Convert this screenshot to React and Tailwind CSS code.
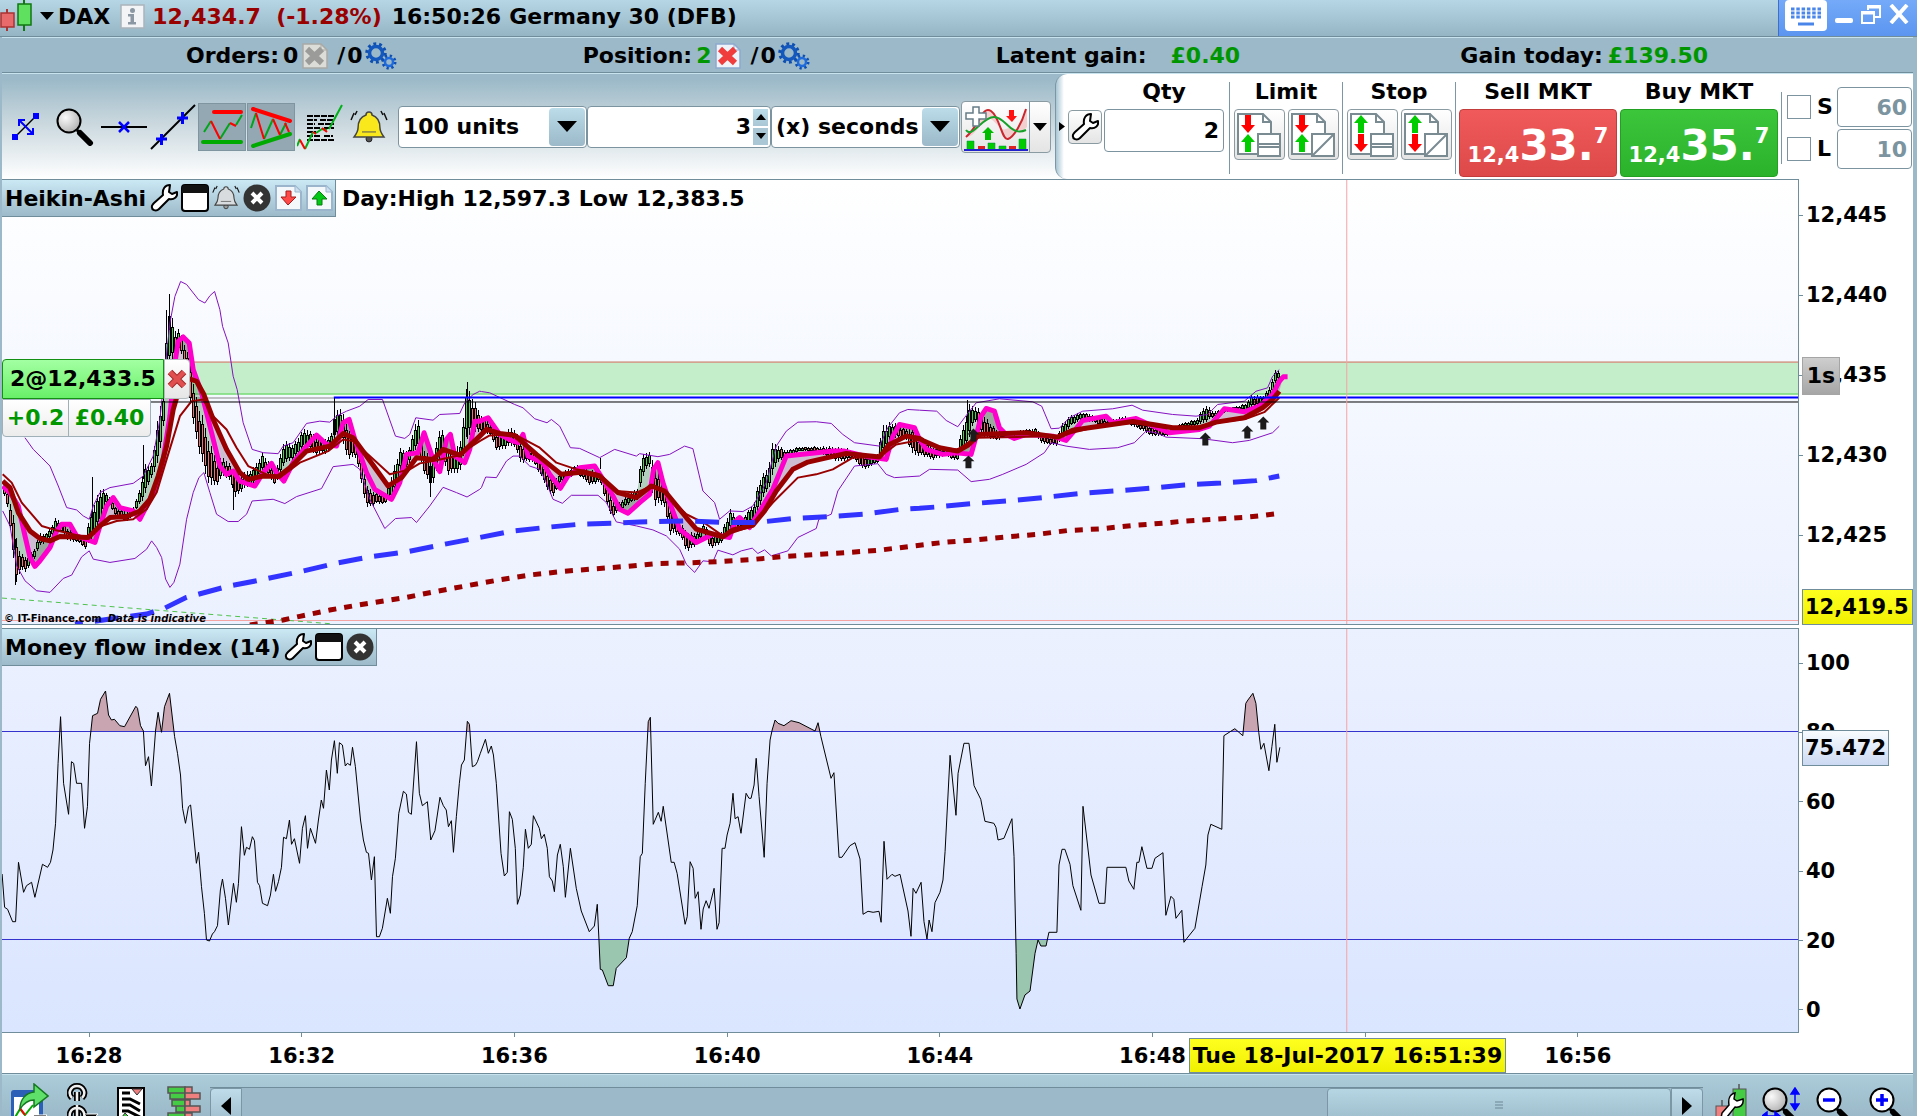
import React from 'react';

/* ---------- chart data ---------- */
const parse = (s) => s.trim().split(/\s+/).map((p) => p.split(',').map(Number));

// Joins sampled sections into one series; each section is [originX, originY, scaleX, data].
const join = (...sections) => {
  const out = [];
  let last = -1;
  sections.forEach(([ox, oy, sx, s]) => {
    parse(s).forEach((p) => {
      const x = ox + p[0] / sx;
      if (x > last) {
        out.push([x, ...p.slice(1).map((v) => oy + v / 3)]);
        last = x;
      }
    });
  });
  return out;
};
const price = (a, b, c) => join([0, 260, 3, a], [440, 360, 3, b], [880, 340, 3, c]);
const pts = (arr) => arr.map(([x, y]) => `${x.toFixed(1)},${y.toFixed(1)}`).join(' ');

const upperBand = price(
  '75,535 100,570 125,595 150,620 175,680 200,745 230,752 250,770 268,780 280,740 300,700 330,685 400,672 430,650 460,590 480,480 495,330 510,190 525,110 542,65 560,74 596,120 615,130 630,108 644,95 660,150 668,200 685,250 700,350 712,390 730,490 757,570 790,580 835,583 850,560 880,550 920,492 960,485 990,488 1010,470 1040,455 1080,440 1105,420 1148,420 1187,530 1215,537 1230,525 1248,475 1300,482 1320,465 1380,462 1395,430 1420,405 1440,395',
  '125,96 150,100 225,135 250,145 285,178 322,190 335,180 360,200 392,265 420,267 480,295 525,270 590,290 600,283 655,292 690,285 735,260 760,268 790,395 825,430 840,480 870,455 910,457 940,440 980,370 1010,260 1040,215 1075,188 1130,187 1175,192 1210,225 1245,250 1320,260 1345,205 1380,160 1405,150 1440,152',
  '172,215 200,243 235,262 255,235 290,190 360,178 460,187 487,200 515,268 540,266 570,235 610,215 700,208 758,197 790,212 880,225 950,230 985,225 1015,195 1095,185 1130,155 1165,145 1180,110 1200,90'
);
const lowerBand = price(
  '8,755 30,800 50,920 75,965 110,995 150,1000 190,958 215,948 245,893 268,875 280,900 330,910 405,898 440,870 455,845 470,865 485,895 497,960 510,985 522,970 540,915 560,780 580,700 597,655 612,640 630,700 650,765 685,787 715,787 740,765 757,725 820,720 855,733 890,712 965,688 1000,622 1060,615 1080,630 1110,720 1155,808 1187,778 1235,775 1250,790 1290,740 1330,684 1370,700 1402,713 1440,690',
  '125,385 138,353 170,355 200,305 220,290 240,290 270,320 300,330 320,370 340,420 368,432 395,408 475,408 500,430 530,488 590,500 640,512 680,530 720,570 740,615 765,640 790,605 820,608 835,573 880,587 905,575 938,567 955,583 975,572 995,590 1045,575 1075,535 1130,508 1138,480 1175,465 1195,395 1245,320 1315,313 1340,345 1365,355 1440,350',
  '150,390 235,392 275,427 330,420 370,405 440,375 495,340 515,310 560,320 630,330 715,325 765,310 800,275 830,280 860,293 970,298 1060,310 1110,303 1180,280 1200,260'
);
const slowAverage = price(
  '8,665 30,685 55,760 90,815 120,838 150,845 180,832 265,835 300,800 330,775 380,772 420,755 450,720 475,650 500,560 520,450 540,380 560,355 590,365 612,405 640,480 680,570 720,640 745,660 790,650 835,652 870,625 920,575 990,560 1030,522 1060,535 1100,590 1165,680 1205,655 1250,595 1300,600 1330,570 1380,587 1440,530',
  '140,210 180,222 225,228 290,285 365,345 430,338 480,350 535,400 590,415 635,380 675,395 740,475 770,510 850,533 880,512 940,498 975,455 1010,395 1060,330 1105,308 1220,282 1320,293 1350,255 1400,230 1440,237',
  '130,303 180,325 235,335 265,318 300,285 440,280 535,293 580,272 650,262 760,246 820,255 880,265 960,265 1010,248 1095,235 1150,205 1180,180 1200,155'
);
const thinAverage = price(
  '8,645 35,670 65,730 125,800 165,812 260,835 290,805 350,785 400,780 440,750 470,700 500,600 540,470 575,425 610,420 640,470 680,510 710,565 745,620 800,645 840,655 900,610 985,575 1030,540 1060,545 1110,590 1170,645 1230,630 1260,612 1300,605 1370,590 1440,545',
  '150,228 225,225 300,265 350,310 410,330 480,345 530,395 590,400 640,378 680,405 740,465 800,495 850,530 940,500 1000,430 1075,355 1130,345 1180,330 1240,295 1320,293 1370,255 1440,242',
  '180,325 235,330 290,295 540,290 650,262 760,250 860,265 950,262 1010,250 1100,238 1155,218 1200,175'
);
const fastAverage = price(
  '8,680 30,700 55,740 75,830 90,895 105,922 120,905 150,865 170,815 185,795 210,795 230,830 285,850 300,800 320,740 340,715 360,745 400,755 420,780 440,740 470,680 490,600 510,470 525,310 535,245 550,232 568,250 580,330 605,400 635,520 660,620 680,645 700,635 720,665 765,680 790,640 815,612 830,640 852,665 880,610 920,560 950,527 980,555 1010,560 1030,490 1048,480 1065,540 1100,640 1125,690 1175,720 1200,670 1220,585 1255,580 1273,520 1300,600 1320,637 1340,540 1352,525 1365,590 1395,610 1410,570 1425,485 1440,485',
  '145,175 180,225 220,245 235,250 250,225 265,290 310,310 330,345 362,387 385,350 420,325 465,320 490,360 520,410 540,450 565,462 600,430 630,405 642,330 655,310 670,370 690,430 720,510 770,550 820,525 870,535 885,490 900,475 930,505 970,440 1000,390 1020,340 1040,290 1180,275 1215,275 1290,293 1340,300 1360,230 1380,195 1425,205 1440,240',
  '140,330 190,345 230,340 275,345 290,290 305,230 320,207 345,215 360,265 380,285 405,297 440,285 520,290 560,303 580,280 610,243 680,230 700,250 770,237 810,255 870,280 960,270 990,260 1035,208 1095,217 1140,200 1180,165 1200,125 1212,112 1225,112'
);
const dashedTrend = price(
  '225,1095 330,1080 440,1065 495,1047 560,1015 690,980 770,965 905,937 1005,913 1110,893 1220,878 1320,858 1440,835',
  '210,517 315,505 420,495 530,492 600,488 740,485 850,490 950,490 1060,478 1170,472 1280,464 1385,450 1440,447',
  '170,503 280,493 385,485 490,475 600,463 705,455 810,447 915,437 1025,431 1130,424 1200,410'
);
const dottedTrend = price(
  '750,1098 850,1083 900,1072 990,1053 1080,1037 1220,1015 1310,997 1440,973',
  '180,662 275,647 370,637 465,629 560,622 655,613 750,611 845,607 940,601 1035,592 1130,586 1225,580 1320,573 1410,562',
  '190,610 285,602 380,593 470,586 565,574 660,569 760,559 850,552 900,547 995,541 1090,535 1140,530 1197,523'
);
// x, high, low
const candleRange = price(
  '8,670,700 25,700,760 38,760,900 47,820,980 60,880,935 75,890,940 100,870,905 120,820,860 140,820,850 165,775,820 185,785,820 205,810,850 230,825,850 255,830,870 275,740,840 300,680,800 320,700,730 345,740,770 375,755,790 400,740,770 415,700,740 432,610,720 450,620,660 465,540,640 475,430,600 490,400,500 498,180,420 510,120,320 520,200,300 540,210,280 555,260,320 570,300,440 590,420,560 610,480,640 630,550,690 650,600,680 670,590,650 690,610,670 705,640,720 730,640,690 760,620,680 785,575,640 800,600,650 825,640,680 850,540,620 880,550,600 915,500,570 950,530,590 990,530,580 1005,450,540 1020,440,530 1040,490,600 1070,540,600 1085,600,690 1100,680,750 1130,700,735 1155,700,735 1180,620,710 1200,565,640 1225,570,620 1250,460,560 1270,560,640 1295,600,700 1320,490,590 1345,570,650 1380,540,640 1400,370,540 1440,460,520',
  '150,190,230 170,220,280 220,200,260 240,240,310 280,280,310 310,310,370 335,360,420 360,340,370 410,315,345 450,330,380 480,330,370 500,380,440 515,420,480 530,430,460 560,410,440 595,380,420 603,280,370 625,272,310 640,300,440 670,380,440 690,430,530 720,490,530 738,510,580 770,520,560 790,490,520 810,520,570 840,520,555 870,450,520 900,480,510 940,430,490 955,360,450 985,320,390 992,250,370 1010,250,310 1035,270,300 1080,262,275 1130,260,280 1190,260,310 1240,270,300 1270,290,335 1315,280,310 1325,190,290 1350,185,240 1400,205,240 1420,200,290 1440,230,290',
  '160,320,365 200,325,350 232,330,368 250,260,340 268,190,310 285,195,240 300,205,280 320,230,300 350,270,305 400,275,290 470,265,290 490,285,315 535,290,320 548,250,300 575,225,260 610,215,240 680,240,265 735,230,250 790,250,275 820,260,292 865,275,290 905,250,265 950,240,260 980,190,250 1000,215,235 1050,205,215 1100,190,215 1112,165,205 1150,170,200 1170,140,180 1187,90,135 1202,95,115'
);
const rangeAt = (x) => {
  let i = 1;
  while (i < candleRange.length - 1 && candleRange[i][0] < x) i += 1;
  const [x0, h0, l0] = candleRange[i - 1];
  const [x1, h1, l1] = candleRange[i];
  const t = Math.max(0, Math.min(1, (x - x0) / (x1 - x0)));
  return [h0 + (h1 - h0) * t, l0 + (l1 - l0) * t];
};
const candles = [];
for (let x = 4, n = 0; x < 1282; x += 3, n += 1) {
  const [h, l] = rangeAt(x);
  const [ph, pl] = rangeAt(x - 4);
  const r = l - h;
  const j = ((n * 37) % 11) / 11;
  const up = h + l < ph + pl;
  candles.push({ x, h: h + r * 0.15 * j, l: l - r * 0.1 * (1 - j), top: h + r * (0.16 + 0.2 * j), bottom: l - r * (0.12 + 0.14 * (1 - j)), up });
}
const candleMiddle = candles.map((c) => [c.x, (c.top + c.bottom) / 2]);

const mfi = join(
  [0, 620, 2.376, '5,762 11,862 18,868 30,905 37,905 44,727 56,817 63,797 75,787 83,832 101,733 113,742 120,727 126,690 132,610 138,430 144,290 151,490 163,583 170,425 175,430 182,490 194,490 201,625 208,560 213,370 220,287 232,280 239,238 251,213 258,285 265,300 272,298 285,317 296,320 323,259 327,265 334,317 341,333 346,437 353,410 360,498 370,330 376,277 384,337 391,260 403,220 415,350 422,400 429,465 434,565 441,610 448,560 453,555 467,730 472,697 479,800 486,880 491,960 498,963 505,942 510,935 517,917 524,810 529,777 536,835 543,915 555,790 562,847 567,790 574,620 581,706 586,682 593,688 600,650 605,662 612,787 617,797 624,850 636,857 643,825 650,763 655,814 662,785 669,742 674,652 681,656 688,600 693,673 700,656 712,730 719,625 726,587 731,685 738,625 750,670 757,600 764,540 769,565 776,450 783,510 788,420 795,362 802,460 807,368 814,375 821,438 826,430 833,436 838,382 845,440 857,600 864,660 871,697 876,700 883,780 890,710 895,950 902,950 909,925 921,835 928,880 933,770 940,715 948,580 959,514 966,522 971,577 978,583 990,365 997,520 1004,557 1016,545 1024,660 1034,632 1046,532 1054,557 1061,570 1066,620 1073,602 1078,697 1085,590 1092,490 1097,435 1104,420 1111,304 1116,313 1123,440 1130,436 1135,425 1142,400 1154,358 1161,400 1168,378 1173,405 1180,490 1191,700 1199,768 1206,757 1211,575 1218,598 1225,685 1230,853 1237,825 1244,742 1249,628 1256,685 1263,673 1268,587 1282,625 1287,656 1294,643 1301,685 1306,770 1313,783 1318,815 1325,705 1332,673 1339,740 1344,832 1356,685 1370,805 1382,873 1401,935 1413,918 1420,853 1424,960 1427,1048 1432,1050 1446,1097 1458,1097 1465,1045 1489,1013 1496,955 1503,935 1515,857 1522,710 1527,700 1534,490 1541,305 1546,292 1553,613 1565,577'],
  [640, 620, 2.376, '51,604 56,559 75,727 82,727 89,760 108,913 113,890 120,725 127,745 132,835 139,815 146,928 151,867 158,842 165,865 177,805 184,928 189,908 196,685 203,685 208,645 215,610 222,520 227,596 234,590 241,640 253,520 260,535 265,535 272,495 277,415 284,530 296,712 303,490 310,360 315,330 322,300 329,310 343,317 360,302 379,308 417,333 424,308 431,350 455,475 462,458 474,712 481,712 500,677 512,668 524,717 531,883 543,874 555,877 569,874 574,907 581,664 588,778 600,763 607,769 619,763 638,873 645,949 650,805 657,820 669,787 676,905 683,957 688,900 695,935 702,848 714,817 721,780 726,695 738,406 752,586 757,460 771,370 783,370 795,497 811,538 821,604 842,610 847,622 852,660 866,655 885,596 890,710 895,1000 897,1137 904,1167 916,1125 928,1113 940,1000 947,960 954,978 966,978 973,937 992,937 997,735 1004,688 1011,688 1023,733 1030,797 1049,871 1054,559 1066,690 1073,765 1092,850 1106,850 1111,742 1156,742 1163,783 1175,808 1182,727 1187,727 1194,680 1206,745 1218,745 1225,715 1244,698 1251,886 1263,829 1270,838 1275,895 1289,871 1294,967 1301,955 1320,925 1337,800 1346,735 1351,645 1358,613 1384,628 1389,347 1415,326 1434,347 1441,250 1446,240 1458,220 1465,250 1472,338 1477,388 1484,370 1496,452 1503,380 1510,313 1515,427 1522,382']
);

/* ---------- charts ---------- */
function UpArrow({ x, y }) {
  return <path d={`M${x} ${y - 6}l6 6h-3v7h-6v-7h-3z`} fill="#1b1b1b" />;
}

function PriceChart() {
  return (
    <svg className="block h-full w-full" viewBox="2 180 1797 445" preserveAspectRatio="none" aria-label="Price chart">
      <rect x="150" y="362" width="1650" height="33" fill="#c3eec9" />
      <path d="M190 362.5H1800" stroke="#dd6b66" />
      <path d="M190 394.5H1800" stroke="#4fd24c" />
      <path d="M190 398.5H340" stroke="#888" />
      <path d="M2 621.5H1799" stroke="#f5a3a3" />
      <polygon points={pts([...fastAverage.slice(0, -1), ...[...slowAverage].reverse()])} fill="#7b3b68" fillOpacity="0.3" />
      <polygon points={pts([...candleMiddle, ...[...fastAverage].reverse()])} fill="#2f7d32" fillOpacity="0.32" />
      <path d="M2 599L334 625" stroke="#4cc24a" strokeDasharray="5 4" />
      <g shapeRendering="crispEdges">
        {candles.map((c) => (
          <g key={c.x}>
            <path d={`M${c.x + 0.5} ${c.h}V${c.l}`} stroke="#000" />
            <rect x={c.x - 1} y={c.top} width="3" height={Math.max(1, c.bottom - c.top)} fill="#000" />
            <rect x={c.x} y={c.top + 1} width="1" height={Math.max(0, c.bottom - c.top - 2)} fill={c.up ? '#46d446' : '#f07070'} />
          </g>
        ))}
        <path d="M169.5 294V330M166.5 310V340M92.5 478V530M233.5 480V511M467.5 382V440M430.5 460V498M334.5 398V440M15.500 540V586M143.500 446V480M600.500 459V470M968.500 400V430" stroke="#000" />
      </g>
      <g fill="none" strokeLinejoin="round">
        <polyline points={pts(upperBand)} stroke="#8410c0" />
        <polyline points={pts(lowerBand)} stroke="#8410c0" />
        <polyline points={pts(fastAverage)} stroke="#ff00cc" strokeWidth="5" />
        <polyline points={pts(thinAverage)} stroke="#990000" strokeWidth="2" />
        <polyline points={pts(slowAverage)} stroke="#990000" strokeWidth="5" />
        <polyline points={pts(dashedTrend)} stroke="#3333ff" strokeWidth="5" strokeDasharray="24 12" strokeDashoffset="16" />
        <polyline points={pts(dottedTrend)} stroke="#990000" strokeWidth="5" strokeDasharray="8 8" />
      </g>
      <path d="M151 402.5H1800" stroke="#000" />
      <path d="M334 398H1800" stroke="#0000ff" strokeWidth="2" />
      <UpArrow x={969} y={462} />
      <UpArrow x={974} y={435} />
      <UpArrow x={1206} y={439} />
      <UpArrow x={1248} y={432} />
      <UpArrow x={1264} y={423} />
      <path d="M1347.5 180V625" stroke="#f5a3a3" />
    </svg>
  );
}

function MfiChart() {
  const line = pts(mfi);
  const area = (y) => `${mfi[0][0]},${y} ${line} ${mfi[mfi.length - 1][0]},${y}`;
  return (
    <svg className="block h-full w-full" viewBox="2 629 1797 403" preserveAspectRatio="none" aria-label="Money flow index chart">
      <clipPath id="overbought"><rect x="0" y="629" width="1800" height="102" /></clipPath>
      <clipPath id="oversold"><rect x="0" y="940" width="1800" height="92" /></clipPath>
      <polygon points={area(731)} fill="#c8a5b0" clipPath="url(#overbought)" />
      <polygon points={area(940)} fill="#9ac6b0" clipPath="url(#oversold)" />
      <path d="M2 731.5H1799M2 939.5H1799" stroke="#3333cc" />
      <polyline points={line} fill="none" stroke="#000" />
      <path d="M1347.5 629V1032" stroke="#f5a3a3" />
    </svg>
  );
}

/* ---------- icons ---------- */
function Caret({ small }) {
  return small
    ? <svg width="14" height="8" viewBox="0 0 14 8"><path d="M0 0h14L7 8z" /></svg>
    : <svg width="20" height="11" viewBox="0 0 20 11"><path d="M0 0h20L10 11z" /></svg>;
}
function CandlesIcon() {
  return (
    <svg width="34" height="32" viewBox="0 0 34 32">
      <path d="M7 9v22" stroke="#a33" strokeWidth="2" /><rect x="1" y="13" width="13" height="14" fill="#e96a6a" stroke="#a33" strokeWidth="1.5" />
      <path d="M24 0v31" stroke="#171" strokeWidth="2" /><rect x="18" y="4" width="13" height="21" fill="#5fe05f" stroke="#171" strokeWidth="1.5" />
    </svg>
  );
}
function InfoIcon() {
  return (
    <svg width="25" height="25" viewBox="0 0 25 25">
      <rect x="1" y="1" width="23" height="23" fill="#f2f4f5" stroke="#aab4ba" strokeWidth="1.5" />
      <circle cx="12.5" cy="6.500" r="2.500" fill="#8b98a4" /><path d="M8 10h6v8h2v2.500H8v-2.500h2.500v-5.500H8z" fill="#8b98a4" />
    </svg>
  );
}
function PageCross({ active }) {
  return (
    <svg width="26" height="26" viewBox="0 0 26 26">
      <path d="M1 1h18l6 6v18H1z" fill={active ? '#eef3fa' : '#dcdcd8'} stroke={active ? '#8fa9cf' : '#a9a9a5'} strokeWidth="1.500" />
      <path d="M19 1v6h6" fill="none" stroke={active ? '#8fa9cf' : '#a9a9a5'} />
      <path d="M5 6l15 14M20 6L5 20" stroke={active ? '#f03c3c' : '#9b9b99'} strokeWidth="6" />
    </svg>
  );
}
function PageArrow({ up }) {
  return (
    <svg width="27" height="26" viewBox="0 0 27 26">
      <path d="M1 1h19l6 6v18H1z" fill="#f4f8fb" stroke="#9bb5cd" strokeWidth="2" /><path d="M20 1v6h6" fill="#cddfee" stroke="#9bb5cd" />
      {up ? <path d="M13 6l8 8h-5v6h-5v-6H6z" fill="#00c814" stroke="#087a10" /> : <path d="M13 20l8-8h-5V6h-5v6H6z" fill="#ff4a4a" stroke="#a61c1c" />}
    </svg>
  );
}
function GearsIcon() {
  return (
    <svg width="32" height="28" viewBox="0 0 32 28" fill="none">
      <circle cx="11" cy="11" r="9" stroke="#0f4fb0" strokeWidth="3.500" strokeDasharray="2.800 2.850" />
      <circle cx="11" cy="11" r="6.500" stroke="#1457bd" strokeWidth="3.500" />
      <circle cx="24" cy="20" r="6" stroke="#0f4fb0" strokeWidth="3" strokeDasharray="2.200 2.510" />
      <circle cx="24" cy="20" r="4" stroke="#1f6bdc" strokeWidth="2.500" />
    </svg>
  );
}
function HandleIcon() {
  return (
    <svg width="30" height="30" viewBox="0 0 30 30">
      <path d="M4 25L25 4" stroke="#000" strokeWidth="1.500" />
      <path d="M1 22h6v6H1zM22 1h6v6h-6z" fill="#00f" />
      <path d="M9 9l12 12M8 14V8h6M16 22h6v-6" stroke="#00f" strokeWidth="2" fill="none" />
    </svg>
  );
}
function Glass({ sign, arrows }) {
  return (
    <svg width="38" height="38" viewBox="0 0 38 38">
      <defs><radialGradient id="lens" cx="0.350" cy="0.350" r="0.800"><stop offset="0" stopColor="#fafafa" /><stop offset="1" stopColor="#a9a9a9" /></radialGradient></defs>
      <path d="M21 22l4 4" stroke="#000" strokeWidth="3" /><path d="M24 25l10 10" stroke="#000" strokeWidth="6" strokeLinecap="round" />
      <circle cx="13" cy="13" r="11.500" fill={sign ? '#fff' : 'url(#lens)'} stroke="#000" strokeWidth="2" />
      {sign && <path d={sign === 'plus' ? 'M7 13h12M13 7v12' : 'M7 13h12'} stroke="#00f" strokeWidth="3.500" />}
      {arrows && <path d="M33 2v20M33 1l-4 6h8zM33 23l-4-6h8zM1 29h15M0 29l5-4v8zM18 29l-5-4v8z" stroke="#00f" fill="#00f" strokeWidth="1.500" />}
    </svg>
  );
}
function HLineIcon() {
  return <svg width="46" height="20" viewBox="0 0 46 20"><path d="M0 10h46" stroke="#000" strokeWidth="2" /><path d="M18 5l10 10M28 5L18 15" stroke="#00f" strokeWidth="2.500" /></svg>;
}
function DiagonalIcon() {
  return <svg width="46" height="46" viewBox="0 0 46 46"><path d="M1 45L45 1" stroke="#000" strokeWidth="2" /><path d="M6 35h11M11.500 30v11M27 14h11M32.500 8v12" stroke="#00f" strokeWidth="3" /></svg>;
}
function ChannelIcon() {
  return (
    <svg width="44" height="44" viewBox="0 0 44 44" fill="none" strokeWidth="2">
      <path d="M4 27l7-11M20 34l10-16M36 20l6-10" stroke="#00a51b" /><path d="M11 16l9 18M30 18l6 3" stroke="#f00" />
      <path d="M14 7h27" stroke="#f00" strokeWidth="4" strokeLinecap="round" /><path d="M3 37h38" stroke="#0a0" strokeWidth="4" strokeLinecap="round" />
    </svg>
  );
}
function WedgeIcon() {
  return (
    <svg width="44" height="44" viewBox="0 0 44 44" fill="none" strokeWidth="2">
      <path d="M2 23L7 8M15 34l9-20M31 30l6-12" stroke="#00a51b" /><path d="M7 8l8 26M24 14l7 16M36 18l4 9" stroke="#f00" />
      <path d="M4 4l37 12" stroke="#f00" strokeWidth="4" strokeLinecap="round" /><path d="M4 41l37-12" stroke="#0a0" strokeWidth="4" strokeLinecap="round" />
    </svg>
  );
}
function ListChartIcon() {
  return (
    <svg width="46" height="46" viewBox="0 0 46 46" fill="none" strokeWidth="2">
      <path d="M10 12h27M10 16h10M23 16h13M10 20h8M21 20h16M10 24h14M27 24h10M10 28h9M10 32h14M27 32h9M10 36h27" stroke="#000" strokeDasharray="6 1" />
      <path d="M0 42l3-7M8 45l8-17M19 29l6-4 5 1M32 25L45 1" stroke="#00b118" /><path d="M3 36l5 9M16 28l3 2M25 24l5 4" stroke="#f00" />
    </svg>
  );
}
function Bell({ gray, size }) {
  return (
    <svg width={size} height={size * 0.84} viewBox="0 0 38 32" fill="none" className="overflow-visible">
      <circle cx="19" cy="28" r="3" fill={gray ? '#999' : '#555'} stroke="#222" />
      <path d="M19 1c2 0 3 1 3 3 6 2 8 7 8 13 0 3 1 5 4 9H4c3-4 4-6 4-9C8 11 10 6 16 4c0-2 1-3 3-3z" fill={gray ? '#d9dcde' : '#f8e81c'} stroke="#444" strokeWidth="1.500" />
      <path d="M12 21h14" stroke="#555" /><path d="M4 2L1 9M7 0L5 4M34 2l3 7M31 0l2 4" stroke="#111" strokeWidth="1.500" />
    </svg>
  );
}
function AddIndicatorIcon() {
  return (
    <svg width="64" height="48" viewBox="0 0 64 48">
      <path d="M1 34C16 22 18 2 27 8S38 38 44 36 58 20 63 6L63 24C56 32 50 22 42 26S28 6 18 20 6 34 1 34z" fill="#f3bfc0" opacity=".7" />
      <path d="M2 34C16 22 18 2 27 8S38 38 44 36 58 20 62 6" fill="none" stroke="#c9272d" strokeWidth="2" />
      <path d="M2 27C8 36 18 14 30 14S46 34 62 27" fill="none" stroke="#18a12a" strokeWidth="2" />
      <path d="M9 4h6v6h7v6h-7v7H9v-7H2v-6h7z" fill="#fff" stroke="#667c88" strokeWidth="1.500" />
      <path d="M45 7h5v6h3l-5 6-6-6h3z" fill="#f11" /><path d="M24 24l6 6h-3v7h-6v-7h-3z" fill="#0b0" />
      <path d="M3 38h7v9H3zM24 40h7v7h-7zM35 43h7v4h-7zM55 36h7v11h-7z" fill="#0c0" stroke="#084" strokeWidth=".5" />
      <path d="M14 43h7v4h-7zM45 43h7v4h-7z" fill="#d22" /><path d="M0 47h64" stroke="#22c" strokeWidth="2" />
    </svg>
  );
}
function WindowIcon() {
  return <svg width="28" height="28" viewBox="0 0 28 28"><rect x="1" y="1" width="26" height="26" rx="3" fill="#fff" stroke="#000" strokeWidth="2" /><path d="M1 9V4a3 3 0 013-3h20a3 3 0 013 3v5z" fill="#111" /></svg>;
}
function CloseIcon() {
  return <svg width="28" height="28" viewBox="0 0 28 28"><circle cx="14" cy="14" r="13.500" fill="#333" /><path d="M9 9l10 10M19 9L9 19" stroke="#fff" strokeWidth="4" /></svg>;
}
function ToolWrench() {
  return (
    <svg width="28" height="28" viewBox="0 0 28 28">
      <path d="M20 1l-1 7 3 2 5-2c1 5-3 8-8 7L9 25c-3 3-8 1-7-3 0-1 1-2 2-3l9-8C12 5 15 1 20 1z" fill="#fff" stroke="#000" strokeWidth="2" strokeLinejoin="round" />
    </svg>
  );
}
function OrderIcon({ first, diagonal }) {
  const up = 'M0 0l7 8h-4v10h-6V8h-4z';
  const down = 'M0 18l7-8h-4V0h-6v10h-4z';
  const isUp = first === 'up';
  return (
    <svg width="46" height="46" viewBox="0 0 46 46" fill="none" stroke="#7a8b92" strokeWidth="2">
      <path d="M2 2h25l8 8v32H2z" fill="#fff" /><path d="M27 2v8h8" />
      {diagonal ? <path d="M22 22h22v22H22zM22 44l22-22" fill="#fff" /> : <path d="M22 22h22v22H22zM22 32h22M22 35h22" fill="#fff" />}
      <path d={isUp ? up : down} transform="translate(12 3)" fill={isUp ? '#0c0' : '#f00'} stroke="none" />
      <path d={isUp ? down : up} transform="translate(12 22)" fill={isUp ? '#f00' : '#0c0'} stroke="none" />
    </svg>
  );
}
function KeyboardIcon() {
  return (
    <svg width="42" height="32" viewBox="0 0 42 32">
      <rect width="42" height="31" rx="4" fill="#fff" />
      <path d="M6 9h30M6 13h30M6 17h30" stroke="#4a86ea" strokeWidth="3" strokeDasharray="3.500 1.800" /><path d="M13 24h16" stroke="#4a86ea" strokeWidth="3" />
    </svg>
  );
}
function ExportIcon() {
  return (
    <svg width="40" height="40" viewBox="0 0 40 40">
      <rect x="2" y="7" width="32" height="32" rx="3" fill="#2c5fb8" /><rect x="5" y="14" width="25" height="24" fill="#fff" />
      <path d="M5 36l6-10 5 6 8-10" stroke="#0a0" strokeWidth="2" fill="none" /><path d="M11 25l5 7" stroke="#f00" strokeWidth="2" />
      <path d="M11 26c0-10 6-16 14-17V1l14 12-14 11v-7c-6 0-10 3-14 9z" fill="#5fe06a" stroke="#14781f" strokeWidth="1.500" />
      <path d="M24 32h14l-7 8z" fill="#000" stroke="#fff" />
    </svg>
  );
}
function LinkIcon() {
  const shape = 'M5 15c-5-5-1-12 5-12s10 7 5 12M10 9v9M5 39c-5-8-1-14 5-14s10 6 5 14M10 22v12';
  return (
    <svg width="32" height="40" viewBox="0 0 32 40" fill="none">
      <path d={shape} stroke="#000" strokeWidth="6" />
      <path d={shape} stroke="#eee" strokeWidth="2.500" />
      <path d="M17 31h14l-7 8z" fill="#000" stroke="#fff" />
    </svg>
  );
}
function BookIcon() {
  return (
    <svg width="28" height="36" viewBox="0 0 28 36">
      <rect x="1" y="1" width="26" height="34" fill="#fff" stroke="#000" strokeWidth="2" />
      <path d="M5 6h8M5 12l8 0 10 5M5 18l8 0 10 6M5 24h6l12 6" stroke="#000" strokeWidth="3" fill="none" />
      <path d="M15 2h10l-5 6z" fill="#f08080" stroke="#333" /><path d="M2 34l6-8 8 8z" fill="#4c4" stroke="#333" />
    </svg>
  );
}
function DepthIcon() {
  return (
    <svg width="34" height="38" viewBox="0 0 34 38" stroke="#555" strokeWidth="1.500">
      <path d="M1 1h17v6H1zM3 7h15v6H3zM5 14h13v6H5zM9 20h9v6H9zM1 27h17v6H1z" fill="#4c4" />
      <path d="M18 1h7v6h-7zM18 7h15v6H18zM18 14h5v6h-5zM18 20h15v6H18zM18 27h7v6h-7z" fill="#f08080" />
    </svg>
  );
}
function SettingsCandlesIcon() {
  return (
    <svg width="32" height="40" viewBox="0 0 32 40">
      <path d="M7 16v20M24 0v40" stroke="#555" strokeWidth="1.500" /><rect x="1" y="22" width="12" height="17" fill="#f08080" stroke="#555" /><rect x="18" y="5" width="13" height="30" fill="#4c4" stroke="#555" />
      <path d="M20 9l-1 6 3 2 6-2c1 6-3 9-8 8l-8 10-6 1 1-5 7-8c-1-6 1-11 6-12z" fill="#fff" stroke="#000" strokeWidth="1.500" />
    </svg>
  );
}

/* ---------- controls ---------- */
function ToolButton({ label, pressed, children }) {
  return (
    <button aria-label={label} aria-pressed={pressed} className={pressed ? 'flex h-12 w-12 items-center justify-center border border-[#7f96a1] bg-[#93a8b2]' : 'flex h-12 w-12 items-center justify-center'}>
      {children}
    </button>
  );
}
function Dropdown({ label, value }) {
  return (
    <div className="relative h-[42px] flex-[190]">
      <select aria-label={label} className="h-full w-full appearance-none rounded border border-[#7b949f] bg-white pl-1 font-bold outline-none" defaultValue={value}><option>{value}</option></select>
      <span className="pointer-events-none absolute inset-y-[2px] right-[2px] flex w-9 items-center justify-center rounded-sm bg-linear-to-b from-[#bcdcea] to-[#9bb9c8]"><Caret /></span>
    </div>
  );
}
function Divider() {
  return <div className="mt-2 h-[92px] w-px bg-[#7b97a5]" />;
}
function OrderGroup({ title, first }) {
  return (
    <div className="flex w-[106px] flex-col items-center">
      <div className="h-[35px] leading-[36px]">{title}</div>
      <div className="flex gap-[3px]">
        {[false, true].map((diagonal) => (
          <button key={String(diagonal)} aria-label={`${title} order ${diagonal ? 'at price' : 'in points'}`} className="flex h-[51px] w-[51px] items-center justify-center rounded border border-[#8b9ba2] bg-linear-to-b from-white to-[#e4e4e4]">
            <OrderIcon first={first} diagonal={diagonal} />
          </button>
        ))}
      </div>
    </div>
  );
}
function DealButton({ title, big, className }) {
  return (
    <div className="flex w-[158px] flex-col items-center">
      <div className="h-[35px] leading-[36px]">{title}</div>
      <button className={`flex h-[68px] w-full items-end justify-center rounded border pb-[7px] text-white ${className}`}>
        <span className="text-[21px] leading-[28px]">12,4</span>
        <span className="text-[42px] leading-[46px]">{big}.</span>
        <span className="self-start pt-[10px] text-[21px] leading-[32px]">7</span>
      </button>
    </div>
  );
}
function RiskRow({ name, value }) {
  return (
    <div className="flex items-center">
      <label className="flex w-[50px] items-center gap-[6px]">
        <input type="checkbox" className="h-6 w-6 appearance-none border border-[#7b949f] bg-white" />{name}
      </label>
      <input aria-label={`${name} distance`} defaultValue={value} className="h-10 w-[75px] rounded border border-[#7b949f] bg-white pr-1 text-right font-bold text-[#7b949f] outline-none" />
    </div>
  );
}
function StatusCount({ label, value, active }) {
  return (
    <div className="flex items-center">
      <span>{label}</span>
      <span className={active ? 'ml-1 text-[#009600]' : 'ml-1'}>{value}</span>
      <button aria-label={`Close ${label}`} className="ml-1"><PageCross active={active} /></button>
      <span className="ml-[9px]">/</span><span className="ml-[2px]">0</span>
      <button aria-label={`${label} automation`} className="ml-[2px]"><GearsIcon /></button>
    </div>
  );
}
function ChipButton({ label, children }) {
  return <button aria-label={label} className="flex h-7 w-7 items-center justify-center">{children}</button>;
}
function PanelChip({ title, children }) {
  return (
    <div className="absolute left-0 top-0 flex h-[37px] items-center gap-[3px] border-b border-r border-[#6f8d9b] bg-linear-to-b from-[#cbe8f5] to-[#9cbac9] pl-[3px] pr-[2px]">
      <h2 className="whitespace-nowrap pr-px pt-[2px]">{title}</h2>
      {children}
    </div>
  );
}

const priceTicks = ['12,445', '12,440', '12,435', '12,430', '12,425'];
const mfiTicks = ['100', '80', '60', '40', '20', '0'];
// The 16:52 slot has only a tick: its label gives way to the crosshair date.
const timeTicks = ['16:28', '16:32', '16:36', '16:40', '16:44', '16:48', '', '16:56'];

function AxisTick({ children }) {
  return <div className="flex h-8 items-center gap-[3px] text-[21px]"><span className="h-px w-1 bg-[#6f8d9b]" />{children}</div>;
}

export default function App() {
  return (
    <div className="flex h-screen flex-col overflow-hidden bg-[#9bb9c9] font-['DejaVu_Sans',sans-serif] text-[22px] font-bold leading-[28px] text-black">
      <header className="flex h-[37px] shrink-0 items-center whitespace-nowrap border-b border-[#6f8d9b] bg-linear-to-b from-[#b6d6e6] to-[#96b5c4]">
        <button aria-label="Instrument menu" className="flex items-center gap-[6px] pb-1"><CandlesIcon /><Caret small /></button>
        <h1 className="ml-1 pb-[2px]">DAX</h1>
        <button aria-label="Information" className="ml-[10px] pb-1"><InfoIcon /></button>
        <span className="ml-[7px] pb-[2px] text-[#990000]">12,434.7&nbsp; (-1.28%)</span>
        <span className="ml-[10px] pb-[2px]">16:50:26</span>
        <span className="ml-2 pb-[2px]">Germany 30 (DFB)</span>
        <div className="ml-auto flex h-full w-[139px] items-start gap-2 border-l border-[#3f6fc6] bg-linear-to-b from-[#74aaf8] to-[#5b95f0] pl-[6px] text-white">
          <button aria-label="Keyboard"><KeyboardIcon /></button>
          <button aria-label="Minimise" className="pt-[18px]"><svg width="18" height="6" viewBox="0 0 18 6"><rect width="18" height="5" rx="2" fill="#fff" /></svg></button>
          <button aria-label="Restore" className="pt-1"><svg width="20" height="20" viewBox="0 0 20 20" fill="none" stroke="#fff" strokeWidth="2"><path d="M7 6V2h12v11h-5" /><path d="M7 3h12" strokeWidth="3" /><rect x="1" y="8" width="12" height="11" /><path d="M1 9h12" strokeWidth="3" /></svg></button>
          <button aria-label="Close" className="pt-1"><svg width="20" height="20" viewBox="0 0 20 20"><path d="M2 1l16 18M18 1L2 19" stroke="#fff" strokeWidth="4" /></svg></button>
        </div>
      </header>

      <div className="flex min-h-0 flex-1 flex-col pl-[2px] pr-1">
        <section className="flex h-9 shrink-0 items-center justify-between whitespace-nowrap border-b border-t border-b-[#6f8d9b] border-t-[#c8e2ee] pl-[184px] pr-[205px] pt-[2px]">
          <div className="flex gap-[186px]">
            <StatusCount label="Orders:" value="0" />
            <StatusCount label="Position:" value="2" active />
            <div className="flex gap-6"><span>Latent gain:</span><span className="text-[#009600]">£0.40</span></div>
          </div>
          <div className="flex gap-[5px]"><span>Gain today:</span><span className="text-[#009600]">£139.50</span></div>
        </section>

        <div className="flex h-[106px] shrink-0 border-t border-[#c8e2ee] bg-linear-to-b from-[#9bb9c8] from-5% via-[#c3d3da] via-40% to-white">
          <div className="flex min-w-0 flex-1 items-center gap-px pr-1">
            <ToolButton label="Line segment"><HandleIcon /></ToolButton>
            <ToolButton label="Zoom"><Glass /></ToolButton>
            <ToolButton label="Horizontal line"><HLineIcon /></ToolButton>
            <ToolButton label="Trend line"><DiagonalIcon /></ToolButton>
            <ToolButton label="Support and resistance" pressed><ChannelIcon /></ToolButton>
            <ToolButton label="Chart patterns" pressed><WedgeIcon /></ToolButton>
            <ToolButton label="Orders on chart"><ListChartIcon /></ToolButton>
            <ToolButton label="Alerts"><Bell size={38} /></ToolButton>
            <div className="ml-1 flex min-w-0 flex-1">
              <Dropdown label="Units" value="100 units" />
              <div className="flex h-[42px] flex-[181] items-center rounded border border-[#7b949f] bg-white pr-[2px]">
                <input aria-label="Interval" defaultValue="3" className="h-full w-full min-w-0 pr-[2px] text-right font-bold outline-none" />
                <div className="flex flex-col gap-[2px]">
                  <button aria-label="Increase" className="flex h-[17px] w-[15px] items-center justify-center bg-linear-to-b from-[#bcdcea] to-[#a9c7d5]"><svg width="10" height="6" viewBox="0 0 10 6"><path d="M0 6h10L5 0z" /></svg></button>
                  <button aria-label="Decrease" className="flex h-[17px] w-[15px] items-center justify-center bg-[#a9c7d5]"><svg width="10" height="6" viewBox="0 0 10 6"><path d="M0 0h10L5 6z" /></svg></button>
                </div>
              </div>
              <Dropdown label="Time base" value="(x) seconds" />
            </div>
            <div className="flex h-[52px] w-[90px] rounded border border-[#8b9ba2] bg-linear-to-b from-white to-[#e4e4e4]">
              <button aria-label="Add indicator" className="flex w-[68px] items-center justify-center border-r border-[#7b97a5]"><AddIndicatorIcon /></button>
              <button aria-label="Indicator menu" className="flex flex-1 items-center justify-center"><Caret small /></button>
            </div>
          </div>

          <div className="flex w-[858px] shrink-0 whitespace-nowrap rounded-l-xl border-l border-[#7b97a5] bg-linear-to-r from-[#a9c6d4] to-white to-[8px]">
            <button aria-label="Collapse order panel" className="mt-[10px] flex h-[84px] w-3 items-center pl-[3px]"><svg width="6" height="9" viewBox="0 0 6 9"><path d="M0 0v9l6-4.500z" /></svg></button>
            <button aria-label="Order settings" className="mt-[36px] flex h-[34px] w-[34px] items-center justify-center rounded border border-[#8b9ba2] bg-linear-to-b from-white to-[#e4e4e4]"><ToolWrench /></button>
            <label className="ml-[2px] mr-[5px] flex w-[120px] flex-col items-center">
              <span className="h-[35px] leading-[36px]">Qty</span>
              <input defaultValue="2" className="h-[43px] w-full rounded border border-[#7b949f] bg-white pr-1 text-right font-bold outline-none" />
            </label>
            <Divider />
            <div className="mx-[3px]"><OrderGroup title="Limit" first="down" /></div>
            <Divider />
            <div className="mx-[3px]"><OrderGroup title="Stop" first="up" /></div>
            <Divider />
            <div className="mx-[3px] flex gap-[3px]">
              <DealButton title="Sell MKT" big="33" className="border-[#c23c3c] bg-linear-to-b from-[#f05a5a] to-[#dd4848]" />
              <DealButton title="Buy MKT" big="35" className="border-[#22a022] bg-linear-to-b from-[#3cc63c] to-[#2bb22b]" />
            </div>
            <div className="mt-[18px] h-[72px] w-px bg-[#7b97a5]" />
            <div className="ml-[5px] mt-[13px] flex flex-col gap-[2px]">
              <RiskRow name="S" value="60" />
              <RiskRow name="L" value="10" />
            </div>
          </div>
        </div>

        <main className="flex min-h-0 flex-1 flex-col bg-white">
          <section className="flex min-h-0 flex-[446]">
            <div className="relative min-w-0 flex-1 border-b border-r border-t border-[#6f8d9b] bg-linear-to-b from-white via-[#f6f9ff] via-40% to-[#ecf1ff]">
              <PriceChart />
              <PanelChip title="Heikin-Ashi">
                <ChipButton label="Settings"><ToolWrench /></ChipButton>
                <ChipButton label="Window"><WindowIcon /></ChipButton>
                <ChipButton label="Alert"><Bell gray size={28} /></ChipButton>
                <ChipButton label="Close panel"><CloseIcon /></ChipButton>
                <ChipButton label="Move down"><PageArrow /></ChipButton>
                <ChipButton label="Move up"><PageArrow up /></ChipButton>
              </PanelChip>
              <p className="absolute left-[340px] top-[5px] whitespace-nowrap">Day:High 12,597.3 Low 12,383.5</p>
              <div className="absolute left-0 top-[179px] flex flex-col items-start">
                <div className="flex h-10">
                  <span className="flex w-[162px] items-center justify-center rounded-tl border border-[#149014] bg-linear-to-b from-[#a2ffa2] to-[#68f068]">2@12,433.5</span>
                  <button aria-label="Close position" className="flex w-[26px] items-center justify-center rounded-r border border-[#b5bcc0] bg-linear-to-b from-white to-[#e6e6e6]">
                    <svg width="20" height="20" viewBox="0 0 20 20"><path d="M3 3l14 14M17 3L3 17" stroke="#a52a2a" strokeWidth="6.500" /><path d="M3 3l14 14M17 3L3 17" stroke="#e05050" strokeWidth="4.500" /></svg>
                  </button>
                </div>
                <div className="flex h-[38px] rounded-b border border-[#9fb0b8] bg-linear-to-b from-white to-[#ececec] text-[#009600]">
                  <span className="flex w-[66px] items-center justify-center border-r border-[#9fb0b8]">+0.2</span>
                  <span className="flex w-[81px] items-center justify-center">£0.40</span>
                </div>
              </div>
              <p className="absolute bottom-0 left-[2px] flex gap-[6px] text-[10px] leading-[10px]"><span>© IT-Finance.com</span><i>Data is indicative</i></p>
            </div>
            <div className="relative flex w-[114px] flex-col justify-between pb-[74px] pt-5">
              {priceTicks.map((t) => <AxisTick key={t}>{t}</AxisTick>)}
              <span className="absolute left-[3px] top-[178px] flex h-[38px] w-[38px] items-center justify-center border border-[#a5a5a5] bg-linear-to-b from-[#cecece] to-[#a6a6a6]">1s</span>
              <span className="absolute bottom-0 left-[3px] right-0 flex h-9 items-center border border-[#6f8d9b] bg-linear-to-b from-[#ffff1e] to-[#f0f000] pl-[2px] text-[21px]">12,419.5</span>
            </div>
          </section>

          <section className="mt-[3px] flex min-h-0 flex-[405]">
            <div className="relative min-w-0 flex-1 border-b border-r border-t border-[#6f8d9b] bg-linear-to-b from-[#ecf1ff] to-[#dae5ff]">
              <MfiChart />
              <PanelChip title="Money flow index (14)">
                <ChipButton label="Settings"><ToolWrench /></ChipButton>
                <ChipButton label="Window"><WindowIcon /></ChipButton>
                <ChipButton label="Close panel"><CloseIcon /></ChipButton>
              </PanelChip>
            </div>
            <div className="relative flex w-[114px] flex-col justify-between pb-[7px] pt-[19px]">
              {mfiTicks.map((t) => <AxisTick key={t}>{t}</AxisTick>)}
              <span className="absolute left-[3px] top-[102px] flex h-9 w-[87px] items-center justify-center border border-[#6f8d9b] bg-linear-to-b from-[#f8fcff] to-[#ccd9f2] text-[21px]">75.472</span>
            </div>
          </section>

          <div className="relative flex h-[41px] shrink-0 justify-between border-b border-[#6f8d9b] pl-[47px] pr-[295px] text-[21px]">
            {timeTicks.map((t, i) => (
              <div key={i} className="flex w-20 flex-col items-center"><span className="h-1 w-px shrink-0 bg-[#6f8d9b]" /><span className="leading-[38px]">{t}</span></div>
            ))}
            <span className="absolute left-[1187px] top-[5px] flex h-[35px] w-[317px] items-center justify-center whitespace-nowrap border border-[#6f8d9b] bg-linear-to-b from-[#ffff1e] to-[#f0f000] text-[22px]">Tue 18-Jul-2017 16:51:39</span>
          </div>
        </main>

        <footer className="flex h-[42px] shrink-0 items-start overflow-hidden border-t border-[#c8e2ee] bg-linear-to-b from-[#acccda] to-[#9bb9c8]">
          <div className="flex w-[208px] shrink-0 gap-[18px] pl-[7px] pt-[7px]">
            <button aria-label="Export"><ExportIcon /></button>
            <button aria-label="Link charts"><LinkIcon /></button>
            <button aria-label="Order book" className="pt-1"><BookIcon /></button>
            <button aria-label="Market depth" className="ml-1 pt-1"><DepthIcon /></button>
          </div>
          <div className="mt-3 flex h-10 min-w-0 flex-1 border-t border-[#6f8d9b] bg-[#9bb9c9]">
            <button aria-label="Scroll left" className="flex w-8 shrink-0 items-start justify-center rounded-tl border border-[#7b97a5] bg-linear-to-b from-[#bedcea] to-[#9bb9c8] pt-2"><svg width="10" height="18" viewBox="0 0 10 18"><path d="M10 0v18L0 9z" /></svg></button>
            <div className="flex flex-1 justify-end">
              <div className="flex w-[344px] justify-center rounded-t border border-[#7b97a5] bg-linear-to-b from-[#b6d6e4] to-[#9bb9c8] pt-3"><svg width="8" height="8" viewBox="0 0 8 8"><path d="M0 1h8M0 4h8M0 7h8" stroke="#6a8796" /></svg></div>
            </div>
            <button aria-label="Scroll right" className="flex w-8 shrink-0 items-start justify-center rounded-tr border border-[#7b97a5] bg-linear-to-b from-[#bedcea] to-[#9bb9c8] pt-2"><svg width="10" height="18" viewBox="0 0 10 18"><path d="M0 0v18l10-9z" /></svg></button>
          </div>
          <div className="flex w-[210px] shrink-0 justify-between pl-3 pr-[6px] pt-2">
            <button aria-label="Chart settings"><SettingsCandlesIcon /></button>
            <button aria-label="Fit chart" className="pt-1"><Glass arrows /></button>
            <button aria-label="Zoom out" className="pt-1"><Glass sign="minus" /></button>
            <button aria-label="Zoom in" className="pt-1"><Glass sign="plus" /></button>
          </div>
        </footer>
      </div>
    </div>
  );
}
